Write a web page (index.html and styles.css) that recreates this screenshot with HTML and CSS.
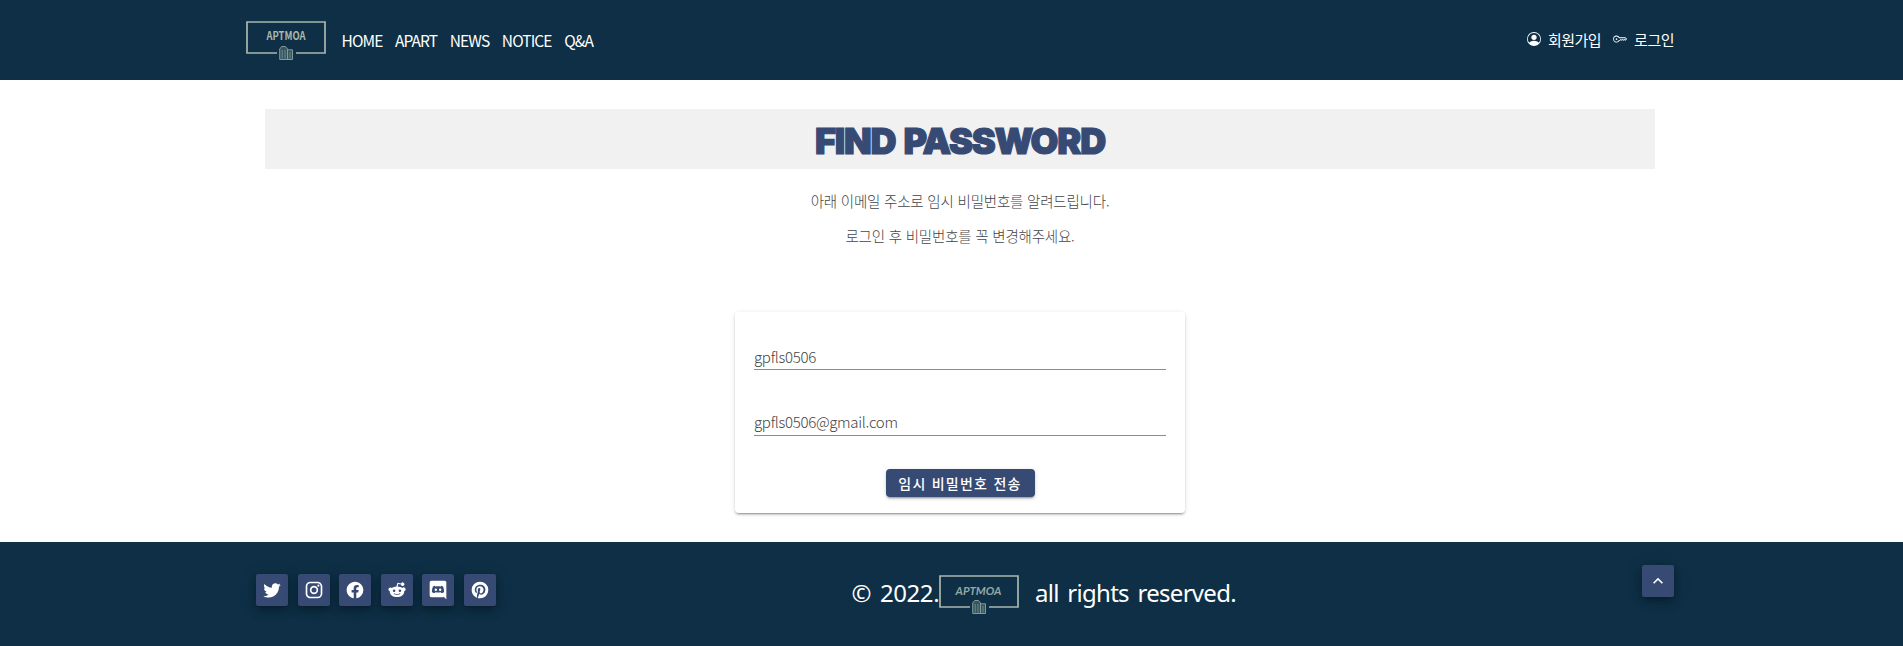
FILE: index.html
```html
<!DOCTYPE html>
<html lang="ko">
<head>
<meta charset="utf-8">
<title>APTMOA</title>
<link rel="stylesheet" href="styles.css">
</head>
<body>
<svg class="defs" aria-hidden="true">
  <symbol id="logo-frame" viewBox="0 0 80 40">
    <path d="M31 32H1V1h78v31H50" fill="none" stroke="#a9b8ae" stroke-width="1.700"/>
    <path d="M33.700 38.500V28l2-2.500h3.800l2 2.500v10.500zM41.500 28.800h5v9.700h-5z" fill="#36555f" stroke="#829a99" stroke-width="1"/>
    <path d="M36.200 29v8.500M39 29v8.500M44 31v6.500" stroke="#7b9594" stroke-width=".8"/>
  </symbol>
</svg>
<header class="navbar">
  <div class="container navbar-inner">
    <a class="logo"><svg viewBox="0 0 80 40"><use href="#logo-frame"/><text class="logo-text" x="40" y="19.300" textLength="39" lengthAdjust="spacingAndGlyphs">APTMOA</text></svg></a>
    <nav class="menu"><a>HOME</a><a>APART</a><a>NEWS</a><a>NOTICE</a><a>Q&amp;A</a></nav>
    <div class="account">
      <a><svg class="bi" viewBox="0 0 16 16"><path d="M11 6a3 3 0 1 1-6 0 3 3 0 0 1 6 0z"/><path fill-rule="evenodd" d="M0 8a8 8 0 1 1 16 0A8 8 0 0 1 0 8zm8-7a7 7 0 0 0-5.468 11.370C3.242 11.226 4.805 10 8 10s4.757 1.225 5.468 2.370A7 7 0 0 0 8 1z"/></svg><span>회원가입</span></a>
      <a><svg class="bi" viewBox="0 0 16 16"><path d="M0 8a4 4 0 0 1 7.465-2H14a.5.5 0 0 1 .354.146l1.500 1.500a.5.5 0 0 1 0 .708l-1.500 1.500a.5.5 0 0 1-.708 0L13 9.207l-.646.647a.5.5 0 0 1-.708 0L11 9.207l-.646.647a.5.5 0 0 1-.708 0L9 9.207l-.646.647A.5.5 0 0 1 8 10h-.535A4 4 0 0 1 0 8zm4-3a3 3 0 1 0 2.712 4.285A.5.5 0 0 1 7.163 9h.63l.853-.854a.5.5 0 0 1 .708 0l.646.647.646-.647a.5.5 0 0 1 .708 0l.646.647.646-.647a.5.5 0 0 1 .708 0l.646.647.793-.793-1-1h-6.630a.5.5 0 0 1-.451-.285A3 3 0 0 0 4 5z"/><circle cx="4" cy="8" r="1"/></svg><span>로그인</span></a>
    </div>
  </div>
</header>
<main class="main">
  <h1 class="title">FIND PASSWORD</h1>
  <p class="guide">아래 이메일 주소로 임시 비밀번호를 알려드립니다.</p>
  <p class="guide">로그인 후 비밀번호를 꼭 변경해주세요.</p>
  <form class="card">
    <div class="field">gpfls0506</div>
    <div class="field email">gpfls0506@gmail.com</div>
    <button type="button" class="send">임시 비밀번호 전송</button>
  </form>
</main>
<footer class="footer">
  <div class="container footer-inner">
    <div class="social">
      <a class="tile"><svg viewBox="0 0 24 24"><path d="M22.460,6C21.690,6.350 20.860,6.580 20,6.690C20.880,6.160 21.560,5.320 21.880,4.310C21.050,4.810 20.130,5.160 19.160,5.360C18.370,4.500 17.260,4 16,4C13.650,4 11.730,5.920 11.730,8.290C11.730,8.630 11.770,8.960 11.840,9.270C8.280,9.090 5.110,7.380 3,4.790C2.630,5.420 2.420,6.160 2.420,6.940C2.420,8.430 3.170,9.750 4.330,10.500C3.620,10.500 2.960,10.300 2.380,10V10.030C2.380,12.110 3.860,13.850 5.820,14.240C5.460,14.340 5.080,14.390 4.690,14.390C4.420,14.390 4.150,14.360 3.890,14.310C4.430,16 6,17.260 7.890,17.290C6.430,18.450 4.580,19.130 2.560,19.130C2.220,19.130 1.880,19.110 1.540,19.070C3.440,20.290 5.700,21 8.120,21C16,21 20.330,14.460 20.330,8.790C20.330,8.600 20.330,8.420 20.320,8.230C21.160,7.630 21.880,6.870 22.460,6Z"/></svg></a>
      <a class="tile"><svg viewBox="0 0 24 24"><path d="M7.800,2H16.200C19.400,2 22,4.600 22,7.800V16.200A5.800,5.800 0 0,1 16.200,22H7.800C4.600,22 2,19.400 2,16.200V7.800A5.800,5.800 0 0,1 7.800,2M7.600,4A3.600,3.600 0 0,0 4,7.600V16.400C4,18.390 5.610,20 7.600,20H16.400A3.600,3.600 0 0,0 20,16.400V7.600C20,5.610 18.390,4 16.400,4H7.600M17.250,5.500A1.250,1.250 0 0,1 18.500,6.750A1.250,1.250 0 0,1 17.250,8A1.250,1.250 0 0,1 16,6.750A1.250,1.250 0 0,1 17.250,5.500M12,7A5,5 0 0,1 17,12A5,5 0 0,1 12,17A5,5 0 0,1 7,12A5,5 0 0,1 12,7M12,9A3,3 0 0,0 9,12A3,3 0 0,0 12,15A3,3 0 0,0 15,12A3,3 0 0,0 12,9Z"/></svg></a>
      <a class="tile"><svg viewBox="0 0 24 24"><path d="M12 2.040C6.500 2.040 2 6.530 2 12.060C2 17.060 5.660 21.210 10.440 21.960V14.960H7.900V12.060H10.440V9.850C10.440 7.340 11.930 5.960 14.220 5.960C15.310 5.960 16.450 6.150 16.450 6.150V8.620H15.190C13.950 8.620 13.560 9.390 13.560 10.180V12.060H16.340L15.890 14.960H13.560V21.960A10 10 0 0 0 22 12.060C22 6.530 17.500 2.040 12 2.040Z"/></svg></a>
      <a class="tile"><svg viewBox="0 0 24 24"><path fill-rule="evenodd" d="M4 8.900a2.300 2.300 0 0 1 1.700.700C7.300 8.600 9.200 8 11.300 7.900L12.600 3.200 17 4.100a2 2 0 1 1-.2 1.300L13.500 4.800 12.700 7.900C14.800 8 16.800 8.600 18.300 9.600A2.300 2.300 0 1 1 20.700 13.400C20.700 17.600 17 20.500 12 20.500S3.300 17.600 3.300 13.400A2.300 2.300 0 0 1 4 8.900ZM8.500 11.500a1.500 1.500 0 1 0 0 3 1.500 1.500 0 0 0 0-3Zm7 0a1.500 1.500 0 1 0 0 3 1.500 1.500 0 0 0 0-3ZM7.900 16.300C9.800 18.600 14.200 18.600 16.100 16.300L15.400 15.900C13.500 17.400 10.500 17.400 8.600 15.900Z"/></svg></a>
      <a class="tile"><svg viewBox="0 0 24 24"><path fill-rule="evenodd" d="M4 1H20A2 2 0 0 1 22 3V23L19 20.300 18.300 19.600 18.600 20.700H4A2 2 0 0 1 2 18.700V3A2 2 0 0 1 4 1ZM8 6.800C6.800 7.100 6 7.700 6 7.700 5.100 9.600 4.600 12 4.700 14.300 5.600 15.500 7 15.700 8.100 15.600L8.900 14.600C10.900 15.300 13.100 15.300 15.100 14.600L15.900 15.600C17 15.700 18.400 15.500 19.300 14.300 19.400 12 18.900 9.600 18 7.700 18 7.700 17.200 7.100 16 6.800L15.300 7.800C13.100 7.400 10.900 7.400 8.700 7.800ZM9.400 10.300a1.450 1.450 0 1 1 0 2.900 1.450 1.450 0 0 1 0-2.900Zm5.200 0a1.450 1.450 0 1 1 0 2.900 1.450 1.450 0 0 1 0-2.900Z"/></svg></a>
      <a class="tile"><svg viewBox="0 0 24 24"><path d="M9.040,21.540C10,21.830 10.970,22 12,22A10,10 0 0,0 22,12A10,10 0 0,0 12,2A10,10 0 0,0 2,12C2,16.250 4.670,19.900 8.440,21.340C8.350,20.560 8.260,19.270 8.440,18.380L9.590,13.440C9.590,13.440 9.300,12.860 9.300,11.940C9.300,10.560 10.160,9.530 11.140,9.530C12,9.530 12.400,10.160 12.400,10.970C12.400,11.830 11.830,13.060 11.540,14.240C11.370,15.220 12.060,16.080 13.060,16.080C14.840,16.080 16.220,14.180 16.220,11.500C16.220,9.100 14.500,7.460 12.030,7.460C9.210,7.460 7.550,9.560 7.550,11.770C7.550,12.630 7.830,13.500 8.290,14.070C8.380,14.130 8.380,14.210 8.350,14.360L8.060,15.450C8.060,15.620 7.950,15.680 7.780,15.560C6.500,15 5.760,13.180 5.760,11.710C5.760,8.550 8,5.680 12.320,5.680C15.760,5.680 18.440,8.150 18.440,11.430C18.440,14.870 16.310,17.630 13.260,17.630C12.290,17.630 11.340,17.110 11,16.500L10.330,18.870C10.100,19.730 9.470,20.880 9.040,21.570Z"/></svg></a>
    </div>
    <div class="copyright"><span class="year">© 2022.</span><svg class="copy-logo" viewBox="0 0 80 40"><use href="#logo-frame"/><text class="logo-text slanted" x="39.500" y="20" textLength="46" lengthAdjust="spacingAndGlyphs">APTMOA</text></svg><span class="rights">all rights reserved.</span></div>
    <a class="tile top"><svg viewBox="0 0 24 24"><path d="M7.410,15.410L12,10.830L16.590,15.410L18,14L12,8L6,14L7.410,15.410Z"/></svg></a>
  </div>
</footer>
</body>
</html>
```
FILE: styles.css
```css
* { box-sizing: border-box; }
body { margin: 0; background: #fff; color: #444; font: 15px/24px "Noto Sans CJK KR", sans-serif; }
.defs { position: absolute; width: 0; height: 0; }
.navbar, .main, .footer { padding-left: 17px; }
.container { width: 1428px; margin: 0 auto; }
.navbar { height: 80px; background: #0e2f45; color: #fff; }
.navbar-inner { display: flex; align-items: center; height: 80px; }
.logo { width: 80px; height: 40px; margin: 2px 15.500px 0 0; }
.logo svg { display: block; width: 80px; height: 40px; }
.logo-text { font: 700 11.500px "Noto Sans CJK KR", sans-serif; fill: #a9b8ae; text-anchor: middle; }
.slanted { font: italic 700 12px Lato, sans-serif; fill: #94a8a3; }
.menu { display: flex; gap: 12.600px; font-size: 15.500px; letter-spacing: -.9px; }
.account { display: flex; gap: 12px; margin-left: auto; letter-spacing: -.5px; }
.account a { display: flex; align-items: center; gap: 7px; }
.bi { width: 14px; height: 14px; margin-top: -2px; fill: currentColor; }
.main { height: 462px; padding-top: 29px; }
.title { width: 1390px; height: 60px; margin: 0 auto 20px; background: #f1f1f1; color: #374a74; text-align: center; font: 900 36px/64px Inter, sans-serif; -webkit-text-stroke: 1.200px #374a74; letter-spacing: -1.200px; word-spacing: 2px; }
.guide { margin: 0 0 11px; text-align: center; font-size: 14.500px; font-weight: 300; letter-spacing: -.2px; }
.card { width: 450px; height: 201px; margin: 64px auto 0; padding: 33px 19px 0; border-radius: 4px; box-shadow: 0 3px 1px -2px rgba(0,0,0,.2), 0 2px 2px rgba(0,0,0,.14), 0 1px 5px rgba(0,0,0,.12); }
.field { height: 25px; margin-bottom: 41px; border-bottom: 1px solid #8b8b8b; font-size: 15px; line-height: 24px; font-weight: 300; letter-spacing: -.3px; }
.email { margin-bottom: 33px; line-height: 22px; }
.send { display: block; width: 149px; height: 28px; margin: 0 auto; padding: 0; border: 0; border-radius: 4px; background: #374a74; color: #fff; font: 500 14px/29px "Noto Sans CJK KR", sans-serif; letter-spacing: 1.250px; box-shadow: 0 3px 1px -2px rgba(0,0,0,.2), 0 2px 2px rgba(0,0,0,.14), 0 1px 5px rgba(0,0,0,.12); }
.footer { height: 104px; background: #0e2f45; color: #fff; }
.footer-inner { display: flex; align-items: flex-start; }
.social { display: flex; gap: 9.600px; margin: 32px 0 0 10px; }
.tile { display: flex; align-items: center; justify-content: center; width: 32px; height: 32px; border-radius: 2px; background: #374a74; box-shadow: 0 3px 5px -1px rgba(0,0,0,.2), 0 6px 10px rgba(0,0,0,.14), 0 1px 18px rgba(0,0,0,.12); }
.tile svg { width: 20px; height: 20px; fill: #fff; }
.copyright { display: flex; margin: 33px 0 0 355.500px; font: 24px/36px "Noto Sans", sans-serif; white-space: nowrap; }
.year { width: 87.500px; letter-spacing: -.4px; word-spacing: 3px; }
.copy-logo { width: 80px; height: 40px; margin-right: 16px; }
.rights { letter-spacing: -.7px; word-spacing: 3px; }
.top { margin: 23px 0 0 auto; }
```
